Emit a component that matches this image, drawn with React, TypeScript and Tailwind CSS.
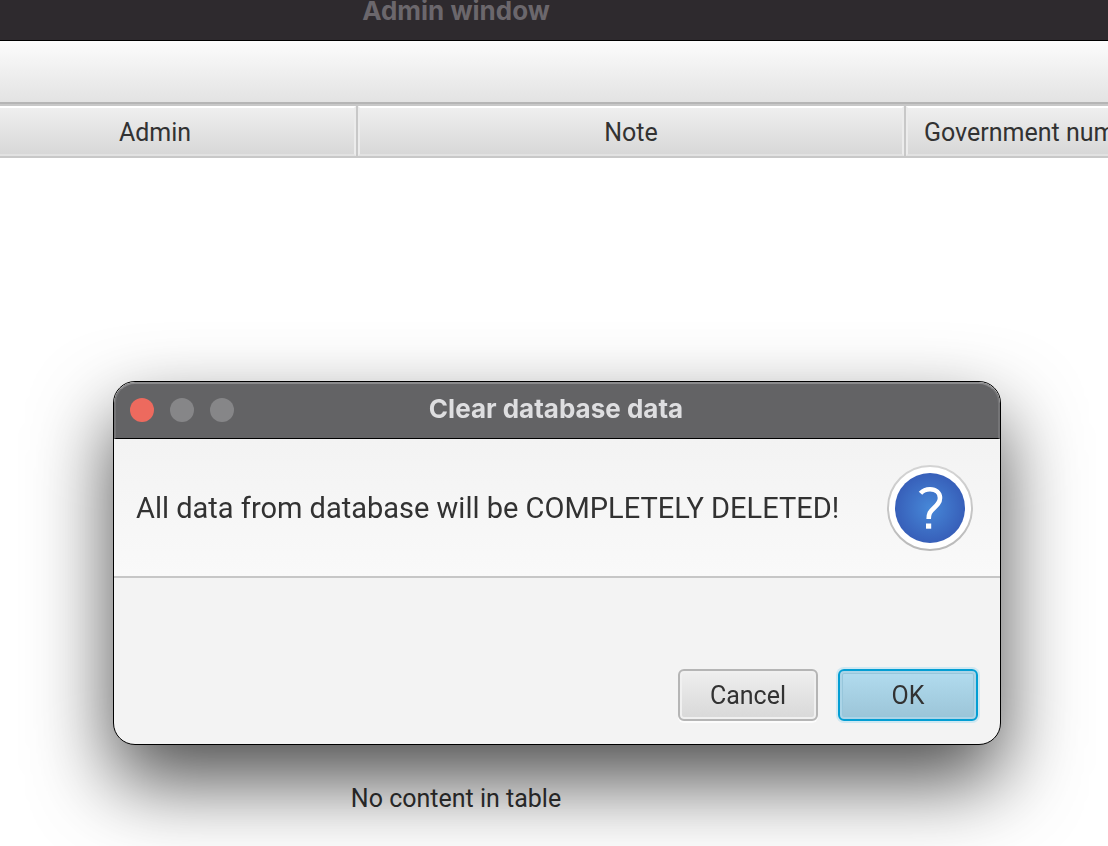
import React from "react";

const columns = [
  { label: "Admin", cell: "w-[358px] border-r-2", face: "border-l-0 pr-11 text-center" },
  { label: "Note", cell: "w-[548px] border-r-2", face: "text-center" },
  { label: "Government num", cell: "", face: "border-r-0 pl-4 text-left" },
];

function AdminWindow() {
  return (
    <main className="flex h-screen flex-col overflow-hidden bg-white">
      <header className="flex h-[41px] shrink-0 items-start justify-center border-b border-black bg-[#2e2a2e] pr-[196px]">
        <h1 className="-mt-1 font-['Inter',sans-serif] text-[26px] leading-[30px] font-bold whitespace-nowrap text-[#6b676c]">
          Admin window
        </h1>
      </header>
      <div className="h-[63px] shrink-0 border-b-2 border-[#b5b5b5] bg-linear-to-b from-[#fcfcfc] to-[#e3e3e3]" />
      <table className="w-full shrink-0 table-fixed border-separate border-spacing-0">
        <thead>
          <tr>
            {columns.map((column) => (
              <th
                key={column.label}
                scope="col"
                className={`overflow-hidden border-y-2 border-[#c8c8c8] p-0 font-normal ${column.cell}`}
              >
                <div
                  className={`h-[50px] border-2 border-t-white border-r-[#ececec] border-b-[#e2e2e2] border-l-[#ececec] bg-linear-to-b from-[#efefef] to-[#d8d8d8] leading-[50px] whitespace-nowrap ${column.face}`}
                >
                  {column.label}
                </div>
              </th>
            ))}
          </tr>
        </thead>
      </table>
      <div className="flex flex-1 items-end justify-center pr-[196px] pb-[31px]">
        <p className="leading-8">No content in table</p>
      </div>
    </main>
  );
}

function QuestionIcon() {
  return (
    <svg viewBox="0 0 86 86" className="size-[86px] shrink-0" aria-hidden="true">
      <defs>
        <radialGradient id="disc" cx="50%" cy="50%" r="50%">
          <stop offset="0" stopColor="#4788d8" />
          <stop offset="1" stopColor="#375fb9" />
        </radialGradient>
        <linearGradient id="ring" x1="0" y1="0" x2="0" y2="1">
          <stop offset="0" stopColor="#d4d4d4" />
          <stop offset="1" stopColor="#b9b9b9" />
        </linearGradient>
      </defs>
      <circle cx="43" cy="43" r="42" fill="#fff" stroke="url(#ring)" strokeWidth="2" />
      <circle cx="43" cy="43" r="35" fill="url(#disc)" />
      <path
        d="M33.5 28.3C36 25.5 39.5 24.2 43 24.2C49 24.2 53 27.7 53 33C53 37.5 50 40.3 46.5 43.5C43 46.700 41.700 48.500 41.700 54"
        fill="none"
        stroke="#fff"
        strokeWidth="4.6"
      />
      <rect x="39" y="58.500" width="5.200" height="5.200" fill="#fff" />
    </svg>
  );
}

function ClearDialog() {
  return (
    <div className="fixed inset-0 flex items-end justify-center pb-[101px] pl-[6px]">
      <section
        role="dialog"
        aria-labelledby="dialog-title"
        className="w-full max-w-[888px] overflow-hidden rounded-[22px] border border-black bg-[#f3f3f3] shadow-[0_36px_80px_rgba(0,0,0,0.7)]"
      >
        <header className="grid h-[57px] grid-cols-[1fr_auto_1fr] items-center rounded-t-[21px] border-t-2 border-r-2 border-b border-l-2 border-t-[#8a8a8c] border-r-[#757577] border-b-black border-l-[#757577] bg-[#636365] pr-4 pb-[2px] pl-[14px]">
          <div className="flex gap-4">
            <button type="button" aria-label="Close" className="size-6 rounded-full bg-[#ed6a5e]" />
            <button type="button" aria-label="Minimize" className="size-6 rounded-full bg-[#868688]" />
            <button type="button" aria-label="Zoom" className="size-6 rounded-full bg-[#868688]" />
          </div>
          <h2 id="dialog-title" className="pb-[2px] font-['Inter',sans-serif] text-[26px] leading-8 font-bold text-[#dedee0]">
            Clear database data
          </h2>
        </header>
        <div className="flex h-[139px] items-center justify-between border-b-2 border-[#c6c6c6] bg-linear-to-b from-[#f3f3f3] to-[#f9f9f9] pr-[27px] pl-[22px]">
          <p className="text-[29px] leading-9 whitespace-nowrap">All data from database will be COMPLETELY DELETED!</p>
          <QuestionIcon />
        </div>
        <div className="flex h-[166px] items-end justify-end gap-5 pr-[22px] pb-[23px]">
          <button
            type="button"
            className="h-[52px] w-[140px] rounded-md border-2 border-[#b5b5b5] bg-linear-to-b from-[#efefef] to-[#d8d8d8] pt-[2px] shadow-[inset_0_0_0_2px_#f0f0f0,0_2px_0_#fcfcfc]"
          >
            Cancel
          </button>
          <button
            type="button"
            className="h-[52px] w-[140px] rounded-md border-2 border-[#039ed3] bg-linear-to-b from-[#b2dcef] to-[#9bc4d7] pt-[2px] shadow-[inset_0_0_0_2px_#abd4e7,inset_0_0_0_3px_#97c6db,0_0_0_2px_#cfe8f2]"
          >
            OK
          </button>
        </div>
      </section>
    </div>
  );
}

export default function App() {
  return (
    <div className="font-['Roboto',sans-serif] text-[25px] text-[#323232]">
      <AdminWindow />
      <ClearDialog />
    </div>
  );
}
